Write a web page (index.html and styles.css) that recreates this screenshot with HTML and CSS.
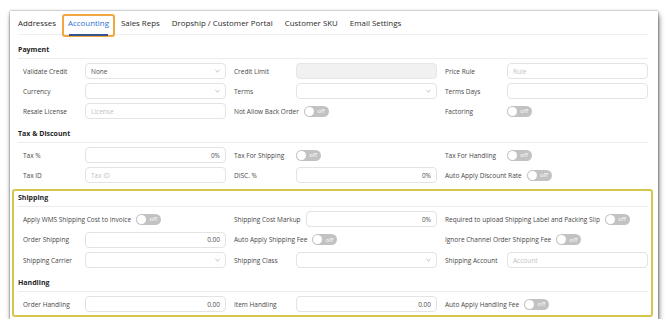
FILE: index.html
```html
<!DOCTYPE html>
<html>
<head>
<meta charset="utf-8">
<link rel="stylesheet" href="styles.css">
</head>
<body>
<div class="page">
  <div class="card">
    <nav class="tabs">
      <span class="tab">Addresses</span>
      <span class="tab active">Accounting</span>
      <span class="tab">Sales Reps</span>
      <span class="tab">Dropship / Customer Portal</span>
      <span class="tab">Customer SKU</span>
      <span class="tab">Email Settings</span>
    </nav>

    <div class="section">
      <div class="heading">Payment</div>
      <div class="grid">
        <div class="field"><span class="label">Validate Credit</span><div class="input select"><span class="value">None</span><svg class="chev" viewBox="0 0 6 4"><polyline points="0.5,0.8 3,3.2 5.5,0.8"/></svg></div></div>
        <div class="field"><span class="label">Credit Limit</span><div class="input disabled"></div></div>
        <div class="field"><span class="label">Price Rule</span><div class="input"><span class="ph">Rule</span></div></div>

        <div class="field"><span class="label">Currency</span><div class="input select"><span class="value"></span><svg class="chev" viewBox="0 0 6 4"><polyline points="0.5,0.8 3,3.2 5.5,0.8"/></svg></div></div>
        <div class="field"><span class="label">Terms</span><div class="input select"><span class="value"></span><svg class="chev" viewBox="0 0 6 4"><polyline points="0.5,0.8 3,3.2 5.5,0.8"/></svg></div></div>
        <div class="field"><span class="label">Terms Days</span><div class="input"></div></div>

        <div class="field"><span class="label">Resale License</span><div class="input"><span class="ph">License</span></div></div>
        <div class="field"><span class="label">Not Allow Back Order</span><span class="toggle"><span class="knob"></span><span class="off">off</span></span></div>
        <div class="field"><span class="label">Factoring</span><span class="toggle"><span class="knob"></span><span class="off">off</span></span></div>
      </div>
    </div>

    <div class="section">
      <div class="heading">Tax &amp; Discount</div>
      <div class="grid">
        <div class="field"><span class="label">Tax %</span><div class="input num"><span class="value">0%</span></div></div>
        <div class="field"><span class="label">Tax For Shipping</span><span class="toggle"><span class="knob"></span><span class="off">off</span></span></div>
        <div class="field"><span class="label">Tax For Handling</span><span class="toggle"><span class="knob"></span><span class="off">off</span></span></div>

        <div class="field"><span class="label">Tax ID</span><div class="input"><span class="ph">Tax ID</span></div></div>
        <div class="field"><span class="label">DISC. %</span><div class="input num"><span class="value">0%</span></div></div>
        <div class="field"><span class="label">Auto Apply Discount Rate</span><span class="toggle"><span class="knob"></span><span class="off">off</span></span></div>
      </div>
    </div>

    <div class="highlight">
      <div class="section">
        <div class="heading first">Shipping</div>
        <div class="grid wide-gap">
          <div class="field"><span class="label">Apply WMS Shipping Cost to Invoice</span><span class="toggle"><span class="knob"></span><span class="off">off</span></span></div>
          <div class="field"><span class="label">Shipping Cost Markup</span><div class="input num"><span class="value">0%</span></div></div>
          <div class="field"><span class="label">Required to upload Shipping Label and Packing Slip</span><span class="toggle"><span class="knob"></span><span class="off">off</span></span></div>

          <div class="field"><span class="label">Order Shipping</span><div class="input num"><span class="value">0.00</span></div></div>
          <div class="field"><span class="label">Auto Apply Shipping Fee</span><span class="toggle"><span class="knob"></span><span class="off">off</span></span></div>
          <div class="field"><span class="label">Ignore Channel Order Shipping Fee</span><span class="toggle"><span class="knob"></span><span class="off">off</span></span></div>

          <div class="field"><span class="label">Shipping Carrier</span><div class="input select"><span class="value"></span><svg class="chev" viewBox="0 0 6 4"><polyline points="0.5,0.8 3,3.2 5.5,0.8"/></svg></div></div>
          <div class="field"><span class="label">Shipping Class</span><div class="input select"><span class="value"></span><svg class="chev" viewBox="0 0 6 4"><polyline points="0.5,0.8 3,3.2 5.5,0.8"/></svg></div></div>
          <div class="field"><span class="label">Shipping Account</span><div class="input"><span class="ph">Account</span></div></div>
        </div>
      </div>
      <div class="section">
        <div class="heading">Handling</div>
        <div class="grid">
          <div class="field"><span class="label">Order Handling</span><div class="input num"><span class="value">0.00</span></div></div>
          <div class="field"><span class="label">Item Handling</span><div class="input num"><span class="value">0.00</span></div></div>
          <div class="field"><span class="label">Auto Apply Handling Fee</span><span class="toggle"><span class="knob"></span><span class="off">off</span></span></div>
        </div>
      </div>
    </div>
  </div>
</div>
</body>
</html>
```

FILE: styles.css
```css
* { box-sizing: border-box; }
html, body { margin: 0; padding: 0; background: #ffffff; }
body { font-family: "Open Sans", "Noto Sans", sans-serif; color: #444; }

.page { padding: 11px 12px 0 10px; }

.card {
  width: 648px;
  background: #fff;
  padding: 0 10px 2px 8px;
  box-shadow: 0 0 2px rgba(0,0,0,0.5), 1px 4px 5px rgba(0,0,0,0.55);
}

.tabs {
  display: flex;
  height: 24px;
  gap: 12px;
  border-bottom: 1px solid #efefef;
}
.tab {
  position: relative;
  display: flex;
  align-items: center;
  font-size: 7.9px;
  color: #2a2a2a;
  white-space: nowrap;
}
.tab.active { color: #2c6fd6; }
.tab.active::before {
  content: "";
  position: absolute;
  top: 3px;
  left: -6px;
  right: -6px;
  height: 19px;
  border: 2px solid #f1a640;
  border-radius: 3px;
}
.tab.active::after {
  content: "";
  position: absolute;
  left: 1px;
  right: 1px;
  bottom: -1.5px;
  height: 2px;
  background: #35548e;
}

.heading {
  font-size: 7px;
  font-weight: 700;
  color: #1f1f1f;
  line-height: 9px;
  padding: 10px 0 4px;
  border-bottom: 1px solid #ececec;
}
.heading.first { padding-top: 2px; }

.grid {
  display: grid;
  grid-template-columns: 203px 203px 203px;
  column-gap: 8px;
  row-gap: 4px;
  padding-left: 5px;
  margin-top: 4px;
}
.grid.wide-gap { row-gap: 4.5px; }

.field {
  display: flex;
  align-items: center;
  height: 16px;
  min-width: 0;
}
.label {
  font-size: 6.5px;
  color: #474747;
  white-space: nowrap;
  min-width: 57px;
  margin-right: 5px;
}

.input {
  flex: 1;
  height: 16px;
  border: 1px solid #e3e3e3;
  border-radius: 4px;
  background: #fff;
  display: flex;
  align-items: center;
  padding: 0 5px;
  font-size: 6.5px;
  color: #505050;
  min-width: 0;
}
.input.disabled { background: #f1f1f1; border-color: #e6e6e6; }
.input.num { justify-content: flex-end; }
.input.select { justify-content: space-between; }
.ph { color: #c2c2c2; }

.chev {
  width: 5px;
  height: 4px;
  fill: none;
  stroke: #9a9a9a;
  stroke-width: 0.8;
}

.toggle {
  position: relative;
  display: inline-flex;
  align-items: center;
  justify-content: flex-end;
  width: 25px;
  height: 11px;
  flex: 0 0 25px;
  border-radius: 6px;
  background: #c2c2c2;
  padding-right: 4px;
}
.knob {
  position: absolute;
  left: 1px;
  top: 1px;
  width: 9px;
  height: 9px;
  border-radius: 50%;
  background: #fff;
}
.off {
  font-size: 6px;
  color: #fff;
  line-height: 1;
}

.highlight {
  margin: 6px -5px 0 -6px;
  padding: 0 3px 3px 4px;
  border: 2px solid #d6c64e;
  border-radius: 3px;
}
```
